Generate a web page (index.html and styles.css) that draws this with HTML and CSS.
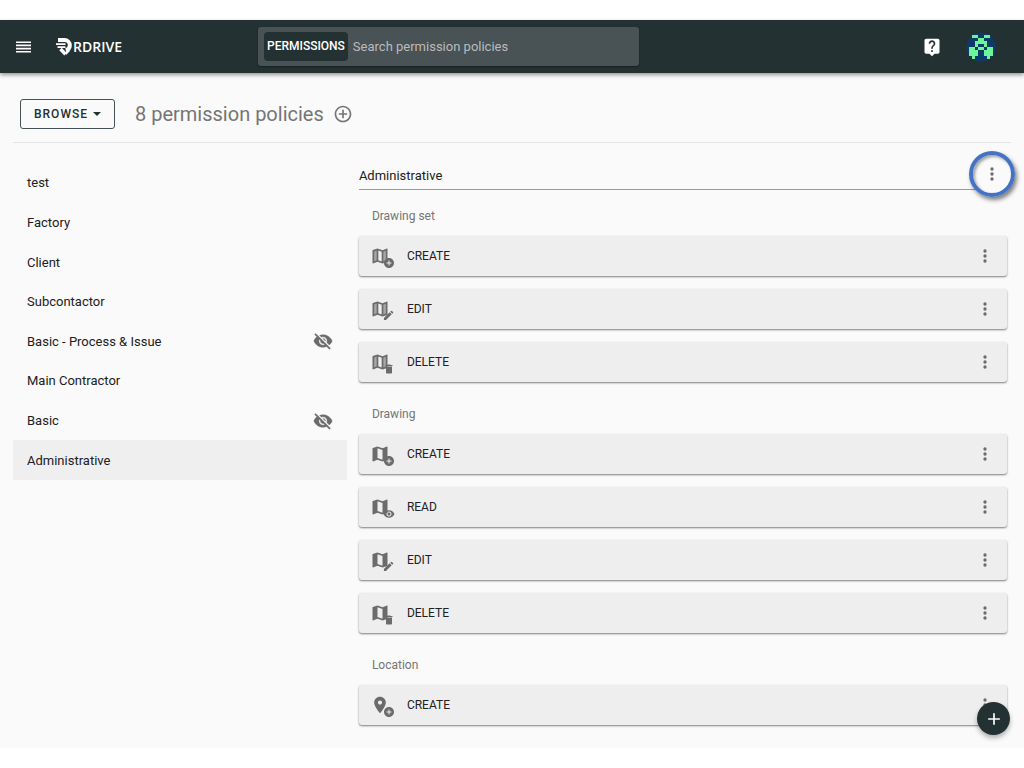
FILE: index.html
```html
<!DOCTYPE html>
<html lang="en">
    <head>
        <meta charset="utf-8">
        <title>Permission policies</title>
        <link rel="stylesheet" href="styles.css">
    </head>
    <body>
        <!-- Shared icons -->
        <svg class="sprite" aria-hidden="true">
            <symbol id="map" viewBox="0 0 24 24">
                <path d="M20.5 3l-.16.03L15 5.1 9 3 3.36 4.9c-.21.07-.36.25-.36.48V20.5c0 .28.22.5.5.5l.16-.03L9 18.9l6 2.1 5.64-1.9c.21-.07.36-.25.36-.48V3.5c0-.28-.22-.5-.5-.5zM15 19l-6-2.11V5l6 2.11V19z"/>
            </symbol>
            <symbol id="mapset" viewBox="0 0 24 24">
                <path opacity=".55" d="M4 5.5L9 4v14l-5 2zM15 6l5-2v14.500l-5 1.500z"/>
                <path d="M20.500 3l-.16.030L15 5.100 9 3 3.360 4.900c-.210.070-.360.250-.360.480V20.500c0 .280.220.500.500.500l.160-.030L9 18.900l6 2.100 5.640-1.900c.210-.070.360-.250.360-.480V3.500c0-.280-.220-.500-.500-.500zM10 5.470l4 1.400v11.660l-4-1.400V5.470zM5 6.460l3-1.010v11.700l-3 1.160V6.460zm14 11.080l-3 1.010V6.860l3-1.160v11.840z"/>
            </symbol>
            <symbol id="pin" viewBox="0 0 24 24">
                <path d="M12 2C8.130 2 5 5.130 5 9c0 5.250 7 13 7 13s7-7.750 7-13c0-3.870-3.130-7-7-7zm0 9.500c-1.380 0-2.500-1.120-2.500-2.500s1.120-2.500 2.500-2.500 2.500 1.120 2.500 2.500-1.120 2.500-2.500 2.500z"/>
            </symbol>
            <symbol id="add" viewBox="0 0 24 24">
                <path d="M12 2C6.480 2 2 6.480 2 12s4.480 10 10 10 10-4.480 10-10S17.520 2 12 2zm5 11h-4v4h-2v-4H7v-2h4V7h2v4h4v2z"/>
            </symbol>
            <symbol id="pencil" viewBox="0 0 24 24">
                <path d="M2 17.500V22h4.500L19 9.500 14.500 5zM22 6.500a1.400 1.400 0 0 0 0-2L19.500 2a1.400 1.400 0 0 0-2 0L15.800 3.700l4.500 4.500z"/>
            </symbol>
            <symbol id="trash" viewBox="0 0 24 24">
                <path d="M6 19c0 1.100.9 2 2 2h8c1.100 0 2-.9 2-2V7H6v12zM19 4h-3.500l-1-1h-5l-1 1H5v2h14V4z"/>
            </symbol>
            <symbol id="eye" viewBox="0 0 24 24">
                <path d="M12 4.500C7 4.500 2.730 7.610 1 12c1.730 4.390 6 7.500 11 7.500s9.270-3.110 11-7.500c-1.730-4.390-6-7.500-11-7.500zM12 17c-2.760 0-5-2.240-5-5s2.240-5 5-5 5 2.240 5 5-2.240 5-5 5zm0-8c-1.660 0-3 1.340-3 3s1.340 3 3 3 3-1.340 3-3-1.340-3-3-3z"/>
            </symbol>
            <symbol id="hidden" viewBox="0 0 24 24">
                <path stroke="#6b6b6b" stroke-width=".5" d="M12 7c2.760 0 5 2.240 5 5 0 .65-.13 1.260-.36 1.830l2.920 2.920c1.510-1.260 2.700-2.890 3.430-4.750-1.730-4.390-6-7.500-11-7.500-1.400 0-2.740.25-3.980.7l2.160 2.160C10.740 7.130 11.350 7 12 7zM2 4.270l2.280 2.280.46.46C3.080 8.300 1.780 10.020 1 12c1.730 4.390 6 7.500 11 7.500 1.550 0 3.030-.3 4.380-.84l.42.42L19.730 22 21 20.730 3.270 3 2 4.270zM7.530 9.800l1.550 1.550c-.05.21-.08.43-.08.65 0 1.660 1.340 3 3 3 .22 0 .44-.03.65-.08l1.550 1.550c-.67.33-1.410.53-2.200.53-2.760 0-5-2.240-5-5 0-.79.2-1.530.53-2.200zm4.310-.78l3.150 3.150.02-.16c0-1.660-1.340-3-3-3l-.17.010z"/>
            </symbol>
            <symbol id="more" viewBox="0 0 24 24">
                <circle cx="12" cy="6" r="2"/><circle cx="12" cy="12" r="2"/><circle cx="12" cy="18" r="2"/>
            </symbol>
        </svg>

        <div id="app">
            <header class="topbar">
                <div class="brand">
                    <button class="iconbutton" aria-label="Menu">
                        <svg width="20" height="20" viewBox="0 0 20 20"><path d="M2 5.200h15M2 8.400h15M2 11.600h15M2 14.800h15" stroke="currentColor" stroke-width="1.600"/></svg>
                    </button>
                    <a class="logo" href="#">
                        <svg width="17" height="20" viewBox="0 0 17 20" fill="none" stroke="white">
                            <path stroke-width="4" d="M2 3H8.500a5.300 5.300 0 0 1 5.300 5.300c0 2.400-1.500 4.300-4 4.900"/>
                            <path stroke-width="1.800" d="M0 7.200H9.500M1.500 10.200H9.500"/>
                            <path stroke-width="3.400" d="M4.500 12l5 5.200"/>
                            <path stroke-width="2.500" d="M9.500 17l3.800-4"/>
                        </svg>
                        <span>RDRIVE</span>
                    </a>
                </div>
                <div class="search">
                    <label class="scope" for="search">PERMISSIONS</label>
                    <input id="search" type="text" placeholder="Search permission policies">
                </div>
                <div class="account">
                    <button class="iconbutton" aria-label="Help">
                        <svg width="20" height="20" viewBox="0 0 24 24" fill="currentColor"><path d="M19 2H5c-1.100 0-2 .9-2 2v14c0 1.100.9 2 2 2h4l3 3 3-3h4c1.100 0 2-.9 2-2V4c0-1.100-.9-2-2-2zm-6 16h-2v-2h2v2zm2.070-7.750l-.9.920C13.450 11.900 13 12.500 13 14h-2v-.5c0-1.100.45-2.100 1.170-2.830l1.240-1.260c.37-.36.59-.86.59-1.410 0-1.100-.9-2-2-2s-2 .9-2 2H8c0-2.210 1.790-4 4-4s4 1.790 4 4c0 .88-.36 1.680-.93 2.250z"/></svg>
                    </button>
                    <button class="iconbutton" aria-label="Account">
                        <svg width="30" height="30" viewBox="0 0 30 30">
                            <circle cx="15" cy="15" r="14.500" fill="#0d3b66"/>
                            <path fill="#6cf59b" d="M6 3h6v3H6zM18 3h6v3h-6zM12 6h6v3h-6zM9 9h12v3H9zM9 12h3v3H9zM18 12h3v3h-3zM3 15h6v3H3zM12 15h6v3h-6zM21 15h6v3h-6zM3 18h9v6H3zM18 18h9v6h-9zM6 24h3v3H6zM21 24h3v3h-3z"/>
                        </svg>
                    </button>
                </div>
            </header>

            <div class="toolbar">
                <button class="browse">BROWSE <svg width="8" height="4" viewBox="0 0 8 4"><path d="M0 0h8L4 4z"/></svg></button>
                <h1>8 permission policies</h1>
                <button class="iconbutton" aria-label="Add policy">
                    <svg width="20" height="20" viewBox="0 0 24 24" fill="currentColor"><path d="M13 7h-2v4H7v2h4v4h2v-4h4v-2h-4V7zm-1-5C6.480 2 2 6.480 2 12s4.480 10 10 10 10-4.480 10-10S17.520 2 12 2zm0 18c-4.410 0-8-3.590-8-8s3.590-8 8-8 8 3.590 8 8-3.590 8-8 8z"/></svg>
                </button>
            </div>

            <main class="content">
                <nav class="policies">
                    <a href="#">test</a>
                    <a href="#">Factory</a>
                    <a href="#">Client</a>
                    <a href="#">Subcontactor</a>
                    <a href="#">Basic - Process &amp; Issue <svg width="20" height="20"><use href="#hidden"/></svg></a>
                    <a href="#">Main Contractor</a>
                    <a href="#">Basic <svg width="20" height="20"><use href="#hidden"/></svg></a>
                    <a href="#" class="selected">Administrative</a>
                </nav>

                <div class="detail">
                    <div class="namerow">
                        <input type="text" value="Administrative" aria-label="Policy name">
                        <button class="iconbutton highlighted" aria-label="Policy options"><svg width="20" height="20"><use href="#more"/></svg></button>
                    </div>

                    <section>
                        <h2>Drawing set</h2>
                        <div class="card">
                            <svg width="26" height="26"><use href="#mapset" x="0" y="3" width="20" height="20"/><use href="#add" x="13" y="14" width="12" height="12"/></svg>
                            <span>CREATE</span>
                            <button class="iconbutton" aria-label="Create options"><svg width="20" height="20"><use href="#more"/></svg></button>
                        </div>
                        <div class="card">
                            <svg width="26" height="26"><use href="#mapset" x="0" y="3" width="20" height="20"/><use href="#pencil" x="13" y="14" width="11" height="11"/></svg>
                            <span>EDIT</span>
                            <button class="iconbutton" aria-label="Edit options"><svg width="20" height="20"><use href="#more"/></svg></button>
                        </div>
                        <div class="card">
                            <svg width="26" height="26"><use href="#mapset" x="0" y="3" width="20" height="20"/><use href="#trash" x="13" y="14" width="12" height="12"/></svg>
                            <span>DELETE</span>
                            <button class="iconbutton" aria-label="Delete options"><svg width="20" height="20"><use href="#more"/></svg></button>
                        </div>
                    </section>

                    <section>
                        <h2>Drawing</h2>
                        <div class="card">
                            <svg width="26" height="26"><use href="#map" x="0" y="3" width="20" height="20"/><use href="#add" x="13" y="14" width="12" height="12"/></svg>
                            <span>CREATE</span>
                            <button class="iconbutton" aria-label="Create options"><svg width="20" height="20"><use href="#more"/></svg></button>
                        </div>
                        <div class="card">
                            <svg width="26" height="26"><use href="#map" x="0" y="3" width="20" height="20"/><use href="#eye" x="13" y="14" width="12" height="12"/></svg>
                            <span>READ</span>
                            <button class="iconbutton" aria-label="Read options"><svg width="20" height="20"><use href="#more"/></svg></button>
                        </div>
                        <div class="card">
                            <svg width="26" height="26"><use href="#map" x="0" y="3" width="20" height="20"/><use href="#pencil" x="13" y="14" width="11" height="11"/></svg>
                            <span>EDIT</span>
                            <button class="iconbutton" aria-label="Edit options"><svg width="20" height="20"><use href="#more"/></svg></button>
                        </div>
                        <div class="card">
                            <svg width="26" height="26"><use href="#map" x="0" y="3" width="20" height="20"/><use href="#trash" x="13" y="14" width="12" height="12"/></svg>
                            <span>DELETE</span>
                            <button class="iconbutton" aria-label="Delete options"><svg width="20" height="20"><use href="#more"/></svg></button>
                        </div>
                    </section>

                    <section>
                        <h2>Location</h2>
                        <div class="card">
                            <svg width="26" height="26"><use href="#pin" x="0" y="3" width="20" height="20"/><use href="#add" x="13" y="14" width="12" height="12"/></svg>
                            <span>CREATE</span>
                            <button class="iconbutton" aria-label="Create options"><svg width="20" height="20"><use href="#more"/></svg></button>
                        </div>
                    </section>
                </div>
            </main>

            <button class="fab" aria-label="Add">
                <svg width="20" height="20" viewBox="0 0 24 24" fill="currentColor"><path d="M19 13h-6v6h-2v-6H5v-2h6V5h2v6h6v2z"/></svg>
            </button>
        </div>
    </body>
</html>
```
FILE: styles.css
```css
*, *::after{
    box-sizing: border-box;
}
body{
    margin:0;
    padding:20px 0;
    background-color: white;
    color: #212121;
    font-family: Roboto, "Liberation Sans", sans-serif;
    font-size:13px;
}
button, input{
    font-family: inherit;
    font-size: inherit;
    color: inherit;
    border:none;
    background: none;
    padding:0;
}
a{
    color: inherit;
    text-decoration: none;
}
svg{
    display:block;
    flex:none;
}
.sprite{
    position:absolute;
    width:0;
    height:0;
}
#app{
    position:relative;
    min-height: calc(100vh - 40px);
    background-color: #fafafa;
}
.iconbutton{
    display:flex;
    flex:none;
    cursor:pointer;
}

/* Top bar */
.topbar{
    display:flex;
    align-items: center;
    height:53px;
    background-color: #243133;
    color:white;
    box-shadow: 0 2px 4px rgba(0,0,0,.4);
}
.brand{
    display:flex;
    align-items: center;
    gap:22px;
    width:258px;
    padding-left:14px;
}
.logo{
    display:flex;
    align-items: center;
    font-family: "Open Sans", sans-serif;
    font-size:14px;
    font-weight: 600;
}
.search{
    display:flex;
    align-items: center;
    flex:0 1 381px;
    height:39px;
    padding:0 6px;
    gap:5px;
    border-radius: 3px;
    background-color: #495254;
    box-shadow: 0 1px 2px rgba(0,0,0,.4);
}
.scope{
    padding:0 3px;
    line-height: 29px;
    border-radius: 4px;
    background-color: #243133;
    font-size:12px;
    font-weight: 500;
}
.search input{
    flex:1;
    min-width:0;
    outline:none;
}
.search input::placeholder{
    color:#b8bcbd;
}
.account{
    display:flex;
    align-items: center;
    gap:24px;
    margin-left:auto;
    padding-right:28px;
}

/* Page heading */
.toolbar{
    display:flex;
    align-items: center;
    height:70px;
    margin:0 13px;
    padding:13px 7px 0;
    border-bottom:1px #e4e4e4 solid;
    color:#757575;
}
.browse{
    display:flex;
    align-items: center;
    justify-content: center;
    gap:5px;
    width:95px;
    height:30px;
    border:1px #455154 solid;
    border-radius: 3px;
    color:#243133;
    fill:#243133;
    font-size:12px;
    font-weight: 500;
    letter-spacing: 1px;
}
h1{
    margin:0 9px 0 20px;
    font-size:20px;
    font-weight: 400;
}

/* Policy list and selected policy */
.content{
    display:grid;
    grid-template-columns: 34fr 66fr;
    gap:12px;
    padding:0 17px 11px 13px;
}
.policies{
    display:grid;
    grid-auto-rows: 1fr;
    align-self: start;
    min-height:317px;
    margin-top:20px;
}
.policies a{
    display:flex;
    align-items: center;
    justify-content: space-between;
    padding:0 14px;
    fill:#6b6b6b;
}
.policies .selected{
    background-color: #efefef;
}
.detail{
    padding-top:15px;
    fill:#6b6b6b;
}
.namerow{
    display:flex;
    height:32px;
    margin-bottom:6px;
}
.namerow input{
    flex:1;
    min-width:0;
    padding-top:4px;
    border-bottom:1px #999 solid;
    outline:none;
}
.namerow .iconbutton{
    position:relative;
    align-items: center;
    justify-content: center;
    width:30px;
}
.highlighted::after{
    content:"";
    position:absolute;
    top:50%;
    left:50%;
    width:46px;
    height:46px;
    transform: translate(-50%, -50%);
    border:4px #4472c4 solid;
    border-radius: 50%;
    box-shadow: 2px 3px 4px rgba(0,0,0,.5), inset 2px 2px 3px rgba(0,0,0,.35);
}
section{
    display:flex;
    flex-direction: column;
    gap:13px;
    margin-bottom:12px;
}
h2{
    margin:0 0 -13px 13px;
    line-height: 40px;
    font-size:12px;
    font-weight: 400;
    color:#757575;
}
.card{
    display:flex;
    align-items: center;
    height:40px;
    padding:0 12px 0 11px;
    border-radius: 3px;
    background-color: #eee;
    box-shadow: 0 1px 2px rgba(0,0,0,.5);
}
.card span{
    flex:1;
    margin-left:11px;
    font-size:12px;
}
.fab{
    position:absolute;
    right:14px;
    bottom:13px;
    display:flex;
    align-items: center;
    justify-content: center;
    width:33px;
    height:33px;
    border-radius: 50%;
    background-color: #243133;
    color:white;
    box-shadow: 0 3px 5px rgba(0,0,0,.3);
}
```
